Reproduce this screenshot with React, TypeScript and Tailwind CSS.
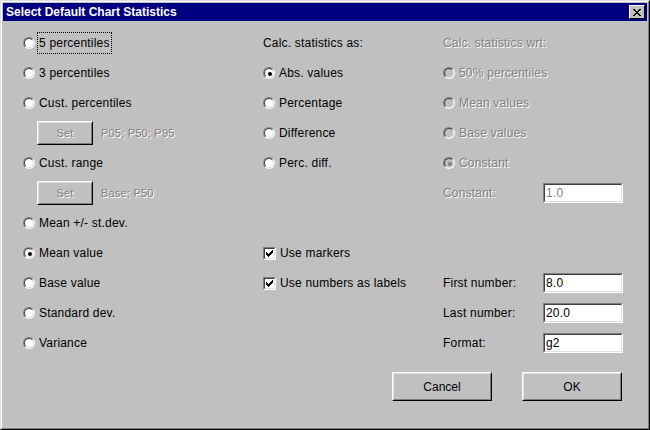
import React from "react";

const gray = "text-[#808080] [text-shadow:1px_1px_0_#ffffff]";

const Radio = ({ checked = false, disabled = false }: { checked?: boolean; disabled?: boolean }) => (
  <span className="relative w-[12px] h-[12px] shrink-0 rounded-full border border-t-[#808080] border-l-[#808080] border-b-white border-r-white">
    <span
      className={`absolute inset-0 rounded-full border border-t-[#404040] border-l-[#404040] border-b-[#dfdfdf] border-r-[#dfdfdf] ${
        disabled ? "bg-[#c0c0c0]" : "bg-white"
      }`}
    />
    {checked && (
      <span
        className={`absolute left-[4px] top-[4px] w-[4px] h-[4px] rounded-full ${
          disabled ? "bg-[#808080]" : "bg-black"
        }`}
      />
    )}
  </span>
);

const Check = () => (
  <span className="w-[13px] h-[13px] shrink-0 border border-t-[#808080] border-l-[#808080] border-b-white border-r-white">
    <span className="flex items-center justify-center w-full h-full bg-white border border-t-[#404040] border-l-[#404040] border-b-[#dfdfdf] border-r-[#dfdfdf]">
      <svg width="7" height="7" viewBox="0 0 7 7" shapeRendering="crispEdges">
        <path d="M6 0h1v3H6zM5 1h1v3H5zM4 2h1v3H4zM3 3h1v3H3zM2 4h1v3H2zM1 3h1v3H1zM0 2h1v3H0z" fill="#000" />
      </svg>
    </span>
  </span>
);

const RadioRow = ({
  label,
  checked,
  disabled,
  focused,
}: {
  label: string;
  checked?: boolean;
  disabled?: boolean;
  focused?: boolean;
}) => (
  <div className="h-[30px] flex items-center gap-[4px]">
    <Radio checked={checked} disabled={disabled} />
    <span
      className={`${disabled ? gray : "text-black"} ${
        focused ? "outline outline-1 outline-dotted outline-black outline-offset-[1px]" : ""
      }`}
    >
      {label}
    </span>
  </div>
);

const CheckRow = ({ label }: { label: string }) => (
  <div className="h-[30px] flex items-center gap-[4px]">
    <Check />
    <span>{label}</span>
  </div>
);

const SetRow = ({ note }: { note: string }) => (
  <div className="h-[30px] flex items-center gap-[8px] pl-[14px] text-[11px]">
    <div className="w-[56px] h-[24px] border border-t-white border-l-white border-b-black border-r-black">
      <div className={`w-full h-full flex items-center justify-center border border-t-[#dfdfdf] border-l-[#dfdfdf] border-b-[#808080] border-r-[#808080] ${gray}`}>
        Set
      </div>
    </div>
    <span className={gray}>{note}</span>
  </div>
);

const Field = ({ label, value, disabled }: { label: string; value: string; disabled?: boolean }) => (
  <div className="h-[30px] flex items-center">
    <span className={`w-[100px] ${disabled ? gray : "text-black"}`}>{label}</span>
    <div className="w-[80px] h-[20px] border border-t-[#808080] border-l-[#808080] border-b-white border-r-white">
      <div
        className={`w-full h-full bg-white flex items-center pl-[1px] border border-t-[#404040] border-l-[#404040] border-b-[#dfdfdf] border-r-[#dfdfdf] ${
          disabled ? "text-[#808080]" : "text-black"
        }`}
      >
        {value}
      </div>
    </div>
  </div>
);

const Empty = () => <div className="h-[30px]" />;

const Button = ({ label }: { label: string }) => (
  <div className="w-[100px] h-[29px] border border-t-white border-l-white border-b-black border-r-black">
    <div className="w-full h-full flex items-center justify-center border border-t-[#dfdfdf] border-l-[#dfdfdf] border-b-[#808080] border-r-[#808080]">
      {label}
    </div>
  </div>
);

export default function App() {
  return (
    <div className="w-[650px] h-[430px] bg-[#c0c0c0] font-['Liberation_Sans',Arial,sans-serif] text-[12px] text-black">
      <div className="w-full h-full border border-t-[#dfdfdf] border-l-[#dfdfdf] border-b-black border-r-black">
        <div className="w-full h-full border border-t-white border-l-white border-b-[#808080] border-r-[#808080] p-[1px] flex flex-col">
          {/* Title bar */}
          <div className="h-[18px] bg-[#000080] flex items-center justify-between pl-[3px] pr-[2px]">
            <span className="text-white font-bold text-[12px]">Select Default Chart Statistics</span>
            <div className="w-[16px] h-[14px] bg-[#c0c0c0] border border-t-white border-l-white border-b-black border-r-black flex items-center justify-center">
              <svg width="8" height="7" viewBox="0 0 8 7" shapeRendering="crispEdges">
                <path d="M0 0h2v1H0zM6 0h2v1H6zM1 1h2v1H1zM5 1h2v1H5zM2 2h4v1H2zM3 3h2v1H3zM2 4h4v1H2zM1 5h2v1H1zM5 5h2v1H5zM0 6h2v1H0zM6 6h2v1H6z" fill="#000" />
              </svg>
            </div>
          </div>

          {/* Body */}
          <div className="pt-[7px] pl-[20px] flex tracking-[0.2px]">
            <div className="w-[240px] flex flex-col">
              <RadioRow label="5 percentiles" focused />
              <RadioRow label="3 percentiles" />
              <RadioRow label="Cust. percentiles" />
              <SetRow note="P05; P50; P95" />
              <RadioRow label="Cust. range" />
              <SetRow note="Base; P50" />
              <RadioRow label="Mean +/- st.dev." />
              <RadioRow label="Mean value" checked />
              <RadioRow label="Base value" />
              <RadioRow label="Standard dev." />
              <RadioRow label="Variance" />
            </div>

            <div className="w-[180px] flex flex-col">
              <div className="h-[30px] flex items-center">Calc. statistics as:</div>
              <RadioRow label="Abs. values" checked />
              <RadioRow label="Percentage" />
              <RadioRow label="Difference" />
              <RadioRow label="Perc. diff." />
              <Empty />
              <Empty />
              <CheckRow label="Use markers" />
              <CheckRow label="Use numbers as labels" />
            </div>

            <div className="flex flex-col">
              <div className={`h-[30px] flex items-center ${gray}`}>Calc. statistics wrt:</div>
              <RadioRow label="50% percentiles" disabled />
              <RadioRow label="Mean values" disabled />
              <RadioRow label="Base values" disabled />
              <RadioRow label="Constant" checked disabled />
              <Field label="Constant:" value="1.0" disabled />
              <Empty />
              <Empty />
              <Field label="First number:" value="8.0" />
              <Field label="Last number:" value="20.0" />
              <Field label="Format:" value="g2" />
            </div>
          </div>

          {/* Buttons */}
          <div className="mt-[14px] flex justify-end gap-[30px] pr-[25px]">
            <Button label="Cancel" />
            <Button label="OK" />
          </div>
        </div>
      </div>
    </div>
  );
}
